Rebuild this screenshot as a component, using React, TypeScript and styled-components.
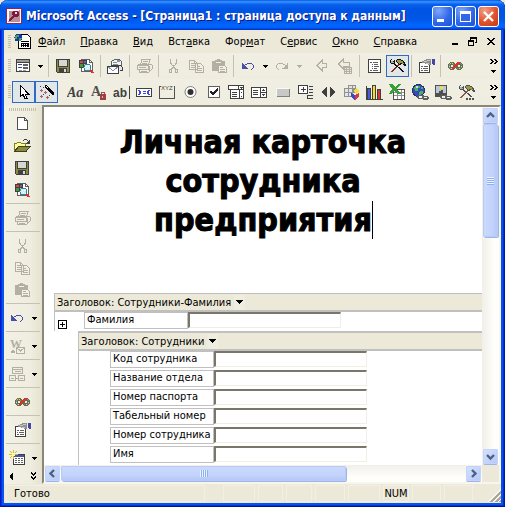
import React from "react";
import styled, { createGlobalStyle, css } from "styled-components";

const face = "#ece9d8";
const bar = "#efeddf";
const line = "#c0c0c0";
const ui = `"DejaVu Sans Condensed", "DejaVu Sans", "Noto Sans", sans-serif`;

const GlobalStyle = createGlobalStyle`
  * { box-sizing: border-box; }
  body { margin: 0; background: #ebe8d9; font-family: ${ui}; font-size: 11px; color: #000; }
  button { font: inherit; color: inherit; margin: 0; padding: 0; border: 0; background: none; }
  svg { flex: none; }
`;

/* ---------- window frame ---------- */

const Window = styled.div`
  min-height: 100vh;
  display: flex;
  flex-direction: column;
  padding: 0 4px 4px;
  border-radius: 8px 8px 0 0;
  overflow: hidden;
  background: ${face};
  box-shadow: inset 1px 0 #0019cf, inset -1px 0 #001aa0, inset 0 -1px #001590, inset 2px -2px #0831d9,
    inset -2px 0 #0030d0, inset 4px -4px #0855ee, inset -4px 0 #0850ee;
`;

const TitleBar = styled.header`
  display: flex;
  align-items: center;
  height: 30px;
  margin: 0 -4px;
  padding: 2px 6px 0;
  gap: 4px;
  background: linear-gradient(#0058e6 0, #3a93ff 6%, #0a62ee 14%, #0054e3 30%, #0055e5 60%, #0066ff 86%, #0060f8 92%, #003dd7 97%, #0033c0 100%);
`;

const Title = styled.h1`
  flex: 1;
  margin: 0;
  color: #fff;
  font-size: 12px;
  line-height: 18px;
  font-weight: bold;
  white-space: nowrap;
  text-shadow: 1px 1px #0a1883;
`;

const Captions = styled.div`
  display: flex;
  gap: 2px;
`;

const Caption = styled.button<{ $close?: boolean }>`
  width: 21px;
  height: 21px;
  border: 1px solid #fff;
  border-radius: 3px;
  background: ${(p) =>
    p.$close
      ? "radial-gradient(circle at 30% 20%, #f0a088, #e2512b 55%, #c43a12)"
      : "radial-gradient(circle at 30% 20%, #7ea6fa, #3168ea 55%, #1f50d8)"};
  svg { display: block; }
`;

/* ---------- menu and toolbars ---------- */

const MenuBar = styled.nav`
  display: flex;
  align-items: center;
  height: 23px;
  padding: 0 5px 0 4px;
`;

const Grip = styled.span<{ $wide?: boolean }>`
  ${(p) =>
    p.$wide
      ? css`
          width: 28px;
          height: 3px;
          margin: 3px auto 2px;
          background: repeating-linear-gradient(90deg, #c3bfab 0 1px, transparent 1px 2px);
        `
      : css`
          width: 3px;
          height: 14px;
          flex: none;
          background: repeating-linear-gradient(#c3bfab 0 1px, transparent 1px 2px);
        `}
`;

const MenuList = styled.div`
  display: flex;
  flex: 1;
  gap: 15px;
  margin-left: 7px;
`;

const MenuItem = styled.button`
  line-height: 16px;
  white-space: nowrap;
`;

const ChildButtons = styled.div`
  display: flex;
  gap: 8px;
`;

const ChildButton = styled.button`
  width: 11px;
  height: 11px;
  svg { display: block; }
`;

const DocIcon = styled.span`
  margin-left: 3px;
  height: 17px;
`;

const Toolbar = styled.div`
  display: flex;
  align-items: center;
  height: 26px;
  padding: 0 3px 0 4px;
  background: linear-gradient(#f1efe3, ${bar});
`;

const Tools = styled.div`
  display: flex;
  flex: 1;
  align-items: center;
  margin-left: 1px;
`;

const ToolButton = styled.button<{ $on?: boolean }>`
  display: flex;
  align-items: center;
  justify-content: center;
  flex: none;
  width: 23px;
  height: 22px;
  border: 1px solid ${(p) => (p.$on ? "#316ac5" : "transparent")};
  background: ${(p) => (p.$on ? "#e1e6e8" : "transparent")};
`;

const DropButton = styled.button`
  display: flex;
  align-items: center;
  justify-content: center;
  flex: none;
  width: 11px;
  height: 22px;
`;

const Divider = styled.span<{ $blank?: boolean }>`
  flex: none;
  width: 1px;
  height: 22px;
  margin: 0 3px 0 2px;
  background: ${(p) => (p.$blank ? "transparent" : "#c5c2b0")};
`;

const More = styled.button`
  display: flex;
  width: 9px;
  height: 20px;
`;

/* ---------- work area ---------- */

const Work = styled.div`
  display: flex;
  flex: 1;
`;

const SideBar = styled.aside`
  display: flex;
  flex-direction: column;
  width: 38px;
  flex: none;
  padding: 0 2px;
  background: linear-gradient(90deg, #f3f1e6, ${bar} 70%, #e6e2d0);
`;

const SideRow = styled.div<{ $drop?: boolean }>`
  display: flex;
  justify-content: ${(p) => (p.$drop ? "flex-start" : "center")};
  gap: 0;
  height: 22px;
  padding-right: ${(p) => (p.$drop ? "0" : "1px")};
`;

const SideDivider = styled.span`
  height: 1px;
  margin: 2px 0 3px;
  background: #c5c2b0;
`;

const SideEnd = styled.div`
  display: flex;
  justify-content: space-between;
  padding: 3px 3px 0;
  height: 14px;
`;

const View = styled.main`
  display: grid;
  flex: 1;
  min-width: 0;
  grid-template: 1fr 17px / 1fr 17px;
  border-style: solid;
  border-width: 2px;
  border-color: #8a8778 #f8f6ec #f8f6ec #8a8778;
  background: ${face};
`;

const Page = styled.div`
  display: flex;
  flex-direction: column;
  min-width: 0;
  background: #fff;
`;

const Heading = styled.h2`
  margin: 0;
  padding: 16px 0 53px;
  font-size: 32px;
  line-height: 39px;
  font-weight: bold;
  text-align: center;
  -webkit-text-stroke: 1px #000;
`;

const Caret = styled.span`
  box-shadow: 1px 0 #000;
`;

const Group = styled.section`
  margin-left: 10px;
`;

const SubGroup = styled.section`
  flex: 1;
  margin-left: 34px;
  padding-bottom: 1px;
  border-left: 1px solid ${line};
`;

const Band = styled.div<{ $thick?: boolean }>`
  display: flex;
  align-items: center;
  gap: 3px;
  height: ${(p) => (p.$thick ? "20px" : "19px")};
  padding-left: 2px;
  border-top: ${(p) => (p.$thick ? "2px" : "1px")} solid ${line};
  border-bottom: 2px solid ${line};
  background: ${face};
  white-space: nowrap;
`;

const BandDrop = styled.button`
  display: flex;
  align-items: center;
  justify-content: center;
  width: 11px;
  height: 15px;
  background: #efeddf;
`;

const GroupBody = styled.div`
  border-left: 1px solid ${line};
`;

const GroupRow = styled.div`
  display: flex;
  align-items: flex-start;
  height: 19px;
`;

const Expander = styled.button`
  width: 9px;
  height: 9px;
  margin: 8px 17px 0 3px;
  svg { display: block; }
`;

const Fields = styled.div`
  display: flex;
  flex-direction: column;
  gap: 2px;
  padding-left: 31px;
`;

const Field = styled.div`
  display: flex;
  height: 17px;
`;

const FieldLabel = styled.label`
  width: 104px;
  height: 17px;
  padding-left: 2px;
  border: 1px solid ${line};
  line-height: 14px;
  white-space: nowrap;
`;

const FieldInput = styled.input`
  width: 153px;
  height: 16px;
  padding: 0 2px;
  border-style: solid;
  border-width: 2px 1px 1px 2px;
  border-color: #79766a #f1efe2 #f1efe2 #79766a;
  background: #fff;
  font: inherit;
  outline: 0;
`;

/* ---------- scroll bars ---------- */

const Scroll = styled.div<{ $horizontal?: boolean }>`
  display: flex;
  flex-direction: ${(p) => (p.$horizontal ? "row" : "column")};
  gap: 1px;
  padding: 1px;
  background: linear-gradient(${(p) => (p.$horizontal ? "180deg" : "90deg")}, #f0efe8, #fefefb 70%);
`;

const ScrollButton = styled.button`
  flex: none;
  width: 15px;
  height: 15px;
  border-radius: 2px;
  background: linear-gradient(135deg, #d6e2fe, #b4c8f6);
  box-shadow: inset 0 0 0 1px #c3d3fd, 0 1px #9db5ea;
  svg { display: block; }
`;

const Thumb = styled.div<{ $horizontal?: boolean }>`
  display: flex;
  align-items: center;
  justify-content: center;
  flex: ${(p) => (p.$horizontal ? "285 0 0" : "113 0 0")};
  border-radius: 2px;
  background: linear-gradient(${(p) => (p.$horizontal ? "180deg" : "90deg")}, #cbdafe, #c2d3fc 60%, #b3c6f4);
  box-shadow: inset 0 0 0 1px #b9cbf5, 1px 1px #9db5ea;
`;

const Ridges = styled.span<{ $horizontal?: boolean }>`
  width: ${(p) => (p.$horizontal ? "8px" : "7px")};
  height: ${(p) => (p.$horizontal ? "7px" : "8px")};
  background: repeating-linear-gradient(${(p) => (p.$horizontal ? "90deg" : "180deg")}, #eef4fe 0 1px, #8cb0f8 1px 2px);
`;

const Track = styled.div<{ $grow: number }>`
  flex: ${(p) => p.$grow} 0 0;
`;

/* ---------- status bar ---------- */

const StatusBar = styled.footer`
  display: flex;
  align-items: stretch;
  gap: 3px;
  height: 19px;
  padding: 1px 0 1px 2px;
`;

const Panel = styled.div<{ $w?: number; $gap?: boolean }>`
  width: ${(p) => (p.$w ? p.$w + "px" : "auto")};
  flex: ${(p) => (p.$w ? "none" : "1")};
  margin-right: ${(p) => (p.$gap ? "15px" : "0")};
  padding-left: ${(p) => (p.$w ? "0" : "7px")};
  border: 1px solid #f2f0e4;
  line-height: 16px;
  text-align: ${(p) => (p.$w ? "center" : "left")};
`;

const Corner = styled.span`
  width: 25px;
  display: flex;
  justify-content: flex-end;
  align-items: flex-end;
`;

/* ---------- icons ---------- */

const Ico = ({ children, w = 17, h = 16 }: { children: React.ReactNode; w?: number; h?: number }) => (
  <svg width={w} height={h} viewBox={`0 0 ${w} ${h}`} shapeRendering="crispEdges" fill="none" aria-hidden="true">
    {children}
  </svg>
);
const F = ({ d, c = "#404040" }: { d: string; c?: string }) => <path d={d} fill={c} />;
const S = ({ d, c = "#404040", f = "none", w = 1 }: { d: string; c?: string; f?: string; w?: number }) => (
  <path d={d} stroke={c} fill={f} strokeWidth={w} />
);
const G = "#b3b0a2";

const Down = ({ c = "#000" }: { c?: string }) => (
  <Ico w={5} h={3}><F c={c} d="M0 0h5v1H0zM1 1h3v1H1zM2 2h1v1H2z" /></Ico>
);
const BigDown = () => (
  <Ico w={7} h={4}><F c="#000" d="M0 0h7v1H0zM1 1h5v1H1zM2 2h3v1H2zM3 3h1v1H3z" /></Ico>
);
const MoreIcon = () => (
  <Ico w={9} h={20}>
    <F c="#000" d="M1 3h2v1H1zM2 4h2v1H2zM3 5h2v1H3zM2 6h2v1H2zM1 7h2v1H1zM5 3h2v1H5zM6 4h2v1H6zM7 5h2v1H7zM6 6h2v1H6zM5 7h2v1H5zM2 14h5v1H2zM3 15h3v1H3zM4 16h1v1H4z" />
  </Ico>
);

const FormIcon = () => (
  <Ico>
    <S d="M1.5 1.5h13v12h-13z" f="#fff" />
    <F c="#9a9a9a" d="M2 2h12v2H2z" /><F c="#404040" d="M1 4h14v1H1z" />
    <F c="#33449c" d="M3 6h4v1H3zM3 9h4v1H3z" />
    <S c="#606060" d="M8.5 6.5h4v1h-4zM8.5 9.5h4v1h-4z" />
    <F c="#9a9a9a" d="M4 12h3v1H4zM8 12h3v1H8z" />
  </Ico>
);
const Save = () => (
  <Ico>
    <S d="M1.5 1.5h13v13h-12l-1-1z" f="#8a8a3c" />
    <F c="#d6d6d6" d="M4 2h8v6H4z" /><S d="M3.5 2v6.5h9V2" />
    <F c="#404040" d="M4 10h8v5H4z" /><F c="#d6d6d6" d="M9 11h2v3H9z" />
  </Ico>
);
const Preview = () => (
  <Ico>
    <S d="M3.5 1.5h8l3 3v9h-11z" f="#fff" c="#606060" /><S d="M11.5 1.5v3h3" c="#606060" />
    <F c="#404040" d="M1 2h8v8H1z" />
    <F c="#e04040" d="M2 3h3v2H2z" /><F c="#4a68d8" d="M6 3h2v2H6z" /><F c="#3c9c3c" d="M2 6h3v3H2z" /><F c="#e8d040" d="M6 6h2v3H6z" />
    <circle cx="9.5" cy="9.5" r="3.5" fill="#c8f4f8" stroke="#4a7c90" />
    <F c="#fff" d="M8 8h1v1H8zM10 8h1v1h-1zM9 10h1v1H9z" />
    <S c="#e03030" w={2} d="M12.5 12.5l3 2.5" />
  </Ico>
);
const MailPrint = () => (
  <Ico>
    <S d="M4.5 7V3.5l3-2h5l2 2V9" f="#f4f4f4" c="#606060" />
    <F c="#8090b0" d="M10 2h3v2h-3z" /><F c="#909090" d="M6 4h4v1H6zM6 6h5v1H6z" />
    <S d="M3.5 7.5h10l2 2v3h-3" f="#e4e4e4" />
    <S d="M.5 8.5h11v7H.5z" f="#fff" /><S c="#8090b0" d="M1 9l5 3.5L11 9" />
  </Ico>
);
const Printer = () => (
  <Ico>
    <S c={G} d="M4.5 6.5l1.5-5h8l-1.5 5" /><F c={G} d="M7 3h5v1H7zM6 5h5v1H6z" />
    <S c={G} d="M1.5 7.5l2-1.5h11l1.5 1v4l-2 2M1.5 7.5h11l2.5-1.5M1.5 7.5v4h11v-4M3.5 11.5v3h9l1.5-2" />
    <F c={G} d="M3 9h7v1H3zM5 13h6v1H5zM13 8h1v4h-1z" />
  </Ico>
);
const Scissors = () => (
  <Ico>
    <S c={G} d="M5.5 1v4l5 6M11.5 1v4l-5 6" /><F c={G} d="M8 7h1v3H8z" />
    <S c={G} d="M4.5 11.5h2v3h-2zM10.5 11.5h2v3h-2z" />
  </Ico>
);
const Copy = () => (
  <Ico>
    <S c={G} d="M1.5 2.5h5l3 3v6h-8zM6.5 2.5v3h3M7.5 5.5h5l3 3v6h-8z" f="#f3f1e6" />
    <F c={G} d="M3 5h3v1H3zM3 7h4v1H3zM3 9h4v1H3zM9 8h3v1H9zM9 10h5v1H9zM9 12h5v1H9z" />
  </Ico>
);
const Paste = () => (
  <Ico>
    <F c={G} d="M1 3h3V2h2V1h3v1h2v1h3v10H1z" /><F c="#efeddf" d="M5 4h5v1H5z" />
    <S c={G} d="M7.5 7.5h6l2 2v5h-8z" f="#f3f1e6" /><F c={G} d="M9 9h3v1H9zM9 11h5v1H9zM9 13h5v1H9z" />
  </Ico>
);
const Undo = () => (
  <Ico>
    <F c="#4650a8" d="M2 5h1v5h5v1H2zM4 7h1v1H4zM5 8h1v1H5zM6 9h1v1H6zM4 8h1v2H4zM5 6h2v1H5zM7 5h5v1H7zM12 6h1v1h-1zM13 7h1v3h-1zM12 10h1v1h-1zM11 11h1v1h-1z" />
    <F c="#4650a8" d="M3 6h1v4H3zM5 9h1v1H5z" />
  </Ico>
);
const Redo = () => (
  <Ico>
    <F c={G} d="M14 5h-1v5H8v1h6zM12 7h1v3h-1zM11 8h1v2h-1zM10 9h1v1h-1zM9 6h2v1H9zM4 5h5v1H4zM3 6h1v1H3zM2 7h1v3H2zM3 10h1v1H3zM4 11h1v1H4zM11 7h1v1h-1z" />
  </Ico>
);
const Back = ({ grid }: { grid?: boolean }) => (
  <Ico>
    <S c={G} d={grid ? "M1.5 6L6 1.5V4h6.500v4H6v2.500z" : "M3 7.5L8 2.5V5.5h4.500v4H8v3z"} />
    {grid && <><F c={G} d="M7 9h8v7H7z" /><F c="#efeddf" d="M8 10h1v1H8zM10 10h2v1h-2zM13 10h1v1h-1zM8 12h1v1H8zM10 12h2v1h-2zM13 12h1v1h-1zM8 14h1v1H8zM10 14h2v1h-2zM13 14h1v1h-1z" /></>}
  </Ico>
);
const ListIcon = () => (
  <Ico>
    <S d="M2.5 1.5h12v13h-12z" f="#fff" />
    <F c="#606060" d="M4 4h2v1H4zM7 4h5v1H7zM6 6h1v1H6zM8 6h4v1H8zM6 8h1v1H6zM8 8h5v1H8zM6 10h1v1H6zM8 10h3v1H8zM4 12h2v1H4zM7 12h5v1H7z" />
  </Ico>
);
const ToolsIcon = ({ dots }: { dots?: boolean }) => {
  const ink = dots ? "#505050" : "#101010";
  return (
    <Ico>
      <F c={ink} d="M1 2h1v3H1zM2 1h1v1H2zM5 2h1v1H5zM4 3h2v2H4zM2 5h4v1H2zM5 6h2v1H5zM6 7h2v1H6zM7 8h2v1H7zM9 9h2v1H9zM10 10h2v1h-2zM11 11h2v1h-2zM12 12h2v1h-2zM13 13h2v1h-2z" />
      <F c="#a8acb0" d="M2 3h2v2H2zM4 4h1v1H4z" />
      <F c={dots ? "#8c5a48" : "#8c2c18"} d="M9 6h2v1H9zM8 7h2v1H8zM6 9h2v1H6zM5 10h2v1H5zM4 11h2v1H4zM3 12h2v1H3zM2 13h2v1H2z" />
      <F c={ink} d="M8 1h4v1h2v1h1v1h1v2h1v2h-2V7h-1V6h-2v1h-2V6H9V5H8V4H7V2h1z" />
      <F c="#9a9a48" d="M8 2h4v1h2v2h1v1h-2V5h-2v1h-1V5H9V4H8z" />
      {dots && <><F c={bar} d="M8 13h9v3H8z" /><F c="#505050" d="M8 14h2v2H8zM11 14h2v2h-2zM14 14h2v2h-2z" /></>}
    </Ico>
  );
};
const Props = () => (
  <Ico>
    <S d="M1.5 4.5h10v10h-10z" f="#fff" /><F c="#606060" d="M3 8h2v1H3zM6 8h4v1H6zM3 10h1v1H3zM5 10h5v1H5zM3 12h2v1H3zM6 12h4v1H6z" />
    <F c="#909090" d="M4 3h2V2h2V1h5v6h-3V6H7V5H4z" /><F c="#c8c8c8" d="M6 3h3v1H6zM9 2h3v1H9zM8 5h3v1H8z" /><F c="#4648a0" d="M14 1h3v6h-2V6h-1z" />
  </Ico>
);
const Infinity = () => (
  <Ico>
    <F c="#6a6a50" d="M3 4h4v1h1v1h1V5h1V4h4v1h1v1h1v4h-1v1h-1v1h-4v-1H9v-1H8v1H7v1H3v-1H2v-1H1V6h1V5h1z" />
    <F c={bar} d="M4 7h2v2H4zM11 7h2v2h-2z" />
    <F c="#f0d840" d="M3 5h1v1H3zM5 5h1v1H5zM2 8h1v1H2zM4 10h1v1H4zM14 8h1v1h-1zM12 10h1v1h-1z" />
    <F c="#48b058" d="M4 4h1v1H4zM6 6h1v1H6zM2 9h1v1H2zM14 6h1v1h-1zM13 10h1v1h-1z" />
    <F c="#6888e8" d="M2 6h1v2H2zM3 10h1v1H3zM14 9h1v1h-1zM10 10h1v1h-1zM13 5h1v1h-1z" />
    <F c="#e03028" d="M10 4h3v2h-2v1h-1v1H9v1H8v1H7v1H5v-2h1V8h1V7h1V6h1V5h1z" />
  </Ico>
);

const Pointer = () => (
  <Ico><S c="#000" f="#fff" d="M5.5 1.5v11l2.5-2 2 4h2l-2-4.500h3.500z" /></Ico>
);
const Wand = () => (
  <Ico>
    <F c="#000" d="M7 1h2v1h1v1h1v1h1v1h1v1h1v1h1v1h1v3h-2v-1h-1V9h-1V8h-1V7h-1V6H9V5H8V4H7z" /><F c="#fff" d="M8 2h1v1H8zM9 3h1v1H9z" />
    <F c="#b06060" d="M2 6h3v1H2zM3 5h1v3H3zM6 8h3v1H6zM7 7h1v3H7zM2 12h3v1H2zM3 11h1v3H3zM8 13h3v1H8zM9 12h1v3H9z" />
    <F c="#404040" d="M2 2h1v1H2zM5 3h1v1H5zM11 11h1v1h-1zM5 10h1v1H5z" />
  </Ico>
);
const LabelIcon = () => (
  <Ico><text x="0" y="13" fill="#404040" fontFamily="Liberation Serif, serif" fontStyle="italic" fontWeight="bold" fontSize="14">Aa</text></Ico>
);
const LockedText = () => (
  <Ico>
    <text x="1" y="12" fill="#505050" fontFamily="Liberation Serif, serif" fontWeight="bold" fontSize="14">A</text>
    <S c="#a04848" d="M11.5 10V8.500h3V10" /><F c="#a04040" d="M10 10h6v6h-6z" /><F c="#e8b0b0" d="M12 12h1v2h-1z" />
  </Ico>
);
const TextBoxIcon = () => (
  <Ico><text x="0" y="13" fill="#404040" fontFamily="Liberation Sans, sans-serif" fontWeight="bold" fontSize="12">ab</text><F d="M16 2h1v13h-1z" /></Ico>
);
const ScrollingText = () => (
  <Ico><S d="M.5 4.5h15v8H.5z" f="#fff" /><F c="#3c48e0" d="M2 6h2v1H2zM3 7h2v3H3zM2 10h2v1H2zM12 6h2v1h-2zM11 7h2v3h-2zM12 10h2v1h-2zM7 7h3v1H7zM7 9h3v1H7z" /></Ico>
);
const FrameIcon = () => (
  <Ico><S c="#505050" d="M2 2.5H.5v12h15v-12H15" /><text x="2" y="6" fill="#404040" fontFamily="Liberation Sans, sans-serif" fontSize="6">XYZ</text></Ico>
);
const RadioIcon = () => (
  <Ico><g shapeRendering="auto"><circle cx="8.5" cy="8" r="5.5" stroke="#808080" fill="#fff" /><circle cx="8.5" cy="8" r="3" fill="#303030" /></g></Ico>
);
const CheckIcon = () => (
  <Ico><S c="#606060" f="#fff" d="M3.5 2.5h11v11h-11z" /><S c="#202020" w={2} d="M5.5 7.5L8 10.5 13 4.5" /></Ico>
);
const ComboIcon = () => (
  <Ico><S f="#fff" d="M.5 1.5h15v4H.5zM2.5 5.5h9v9h-9zM11.5 5.5h4v9h-4zM10.5 1.5v4" /><F d="M4 8h5v1H4zM4 10h5v1H4zM4 12h5v1H4zM12 3h3v1h-3zM13 4h1v1h-1zM13 8h1v1h-1zM13 12h1v1h-1z" /></Ico>
);
const ListBoxIcon = () => (
  <Ico><S f="#fff" d="M.5 3.5h15v10H.5zM9.5 3.5v10M9.5 8.5h6" /><F d="M2 6h5v1H2zM2 8h5v1H2zM2 10h5v1H2zM12 5h1v1h-1zM11 6h3v1h-3zM11 10h3v1h-3zM12 11h1v1h-1z" /></Ico>
);
const PushIcon = () => (
  <Ico><F c="#808080" d="M3 5h13v8H3z" /><F c="#f8f8f8" d="M2 4h13v8H2z" /><F c="#c8c8c4" d="M3 5h12v7H3z" /></Ico>
);
const ExpandIcon = () => (
  <Ico><S f="#fff" d="M1.5 1.5h9v8h-9z" /><F d="M4 5h5v1H4zM6 3h1v5H6zM12 2h4v1h-4zM12 5h4v1h-4zM12 8h4v1h-4zM10 11h6v1h-6zM10 14h6v1h-6zM10 11h1v4h-1z" /></Ico>
);
const NavIcon = () => (
  <Ico><F d="M7 3v10H6L2 8l4-5zM10 3h1l4 5-4 5h-1z" c="#404040" /></Ico>
);
const PivotIcon = () => (
  <Ico>
    <F c="#909090" d="M1 4h4V1h8v8h-3v4H1z" /><F c="#e4e4e4" d="M2 5h3v3H2zM6 5h3v3H6zM2 9h3v3H2zM6 9h3v3H6zM6 2h3v2H6zM10 2h2v2h-2z" />
    <F c="#f0e040" d="M10 7l3-3 3 3-3 3z" /><F c="#3848d0" d="M8 9l4 2v5l-4-3z" /><F c="#e03838" d="M12 11l4-2v4l-4 3z" />
  </Ico>
);
const ChartIcon = () => (
  <Ico>
    <F d="M0 2h1v13h16v1H0z" /><F d="M1 4h4v11H1zM6 1h4v14H6zM11 5h4v10h-4z" />
    <F c="#4858e0" d="M2 5h2v10H2z" /><F c="#f0e020" d="M7 2h2v13H7z" /><F c="#e03030" d="M12 6h2v9h-2z" />
  </Ico>
);
const SheetIcon = () => (
  <Ico>
    <S f="#fff" d="M4.5 5.5h11v10h-11z" c="#505050" /><S c="#909090" d="M5 8.5h10M5 11.5h10M8.5 6v9M12.5 6v9" />
    <F c="#38a038" d="M0 0h4l2 3 3-3h3L8 5l4 5H8L5 7l-3 3H0l3-5z" />
  </Ico>
);
const Chain = () => (
  <><F c="#606060" d="M6 11h6v1h4v1h1v2h-1v1h-5v-1H6v-1H5v-2h1z" /><F c="#f0f0f0" d="M7 12h3v2H7zM12 13h3v1h-3z" /></>
);
const Globe = () => (
  <>
    <circle cx="6.5" cy="6.5" r="6" fill="#3848c0" stroke="#303060" />
    <F c="#40b858" d="M3 2h5v2H6v3H3V5H2zM8 7h3v3H9v1H7V8zM9 3h2v2H9z" /><F c="#b8e0f8" d="M4 2h2v2H4z" />
  </>
);
const WebIcon = () => <Ico><Globe /><Chain /></Ico>;
const PictureIcon = () => (
  <Ico>
    <S c="#505050" f="#b8c8d8" d="M.5 1.5h11v11h-11z" /><F c="#505050" d="M1 9h3V7h2V6h2v3h3v3H1z" /><F c="#f0e030" d="M5 2h3v3H5z" /><Chain />
  </Ico>
);

const NewIcon = () => (
  <Ico><S f="#fff" d="M3.5 1.5h7l3 3v9h-10z" c="#505050" /><S d="M10.5 1.5v3h3" c="#505050" /></Ico>
);
const OpenIcon = () => (
  <Ico>
    <S c="#808020" f="#fffca0" d="M.5 13.5v-8h2l1-1h3l1 1h4v3" /><S c="#404018" f="#8a8a3c" d="M.5 13.5l4-5h11.500l-4 5z" />
    <F c="#404040" d="M9 2h1v1H9zM10 1h3v1h-3zM13 2h1v1h-1zM15 2h1v4h-4V5h1V4h1V3h1z" />
  </Ico>
);
const WordIcon = () => (
  <Ico>
    <text x="1" y="10" fill={G} fontFamily="Liberation Serif, serif" fontWeight="bold" fontSize="12">W</text>
    <F c={G} d="M2 15v-2h1v-1h2v1h1v2z" /><S c={G} f="#f3f1e6" d="M7.5 9.5h8v6h-8z" /><S c={G} d="M8 10l3.5 3 3.5-3" />
  </Ico>
);
const RelateIcon = () => (
  <Ico>
    <S c={G} d="M3.5 1.5h10v6h-10zM3 3.5h11M6 5.5h6M.5 9.5h6v5h-6zM9.5 9.5h6v5h-6zM2 12.5h3M11 12.5h3M6.5 12.5h3" />
  </Ico>
);
const NewTable = () => (
  <Ico>
    <S d="M4.5 4.5h11v10h-11z" f="#fff" /><F c="#4650b0" d="M5 5h10v2H5z" /><F c="#606060" d="M6 8h2v1H6zM9 8h2v1H9zM12 8h2v1h-2zM6 10h2v1H6zM9 10h2v1H9zM12 10h2v1h-2zM6 12h2v1H6zM9 12h2v1H9zM12 12h2v1h-2z" />
    <F c="#d8b828" d="M4 0h1v3H4zM4 6h1v3H4zM0 4h3v1H0zM6 4h3v1H6zM1 1h1v1H1zM2 2h1v1H2zM7 1h1v1H7zM6 2h1v1H6zM1 7h1v1H1zM2 6h1v1H2z" /><F c="#fff890" d="M3 3h3v3H3z" />
  </Ico>
);
const AccessIcon = () => (
  <Ico w={16} h={16}>
    <F c="#982050" d="M0 0h16v16H0z" /><F c="#fff" d="M1 1h14v14H1z" /><F c="#b89098" d="M2 2h12v12H2z" /><F c="#fff" d="M2 2h11v1H3v10H2z" />
    <F c="#801840" d="M7 3h5v1h1v4h-1v1H8v1H7v1H6v1H5v1H3v-2h1v-1h1V9h1V8h1V7H6V4h1z" /><F c="#f4d8e0" d="M9 4h2v2H9z" />
  </Ico>
);
const PageIcon = () => (
  <Ico w={17} h={17}>
    <S c="#000" f="#fff" d="M4.5 1.5h9l3 3v11h-12z" /><F c="#000" d="M7 8h8v1H7zM7 10h8v4H7z" /><F c="#fff" d="M8 11h1v1H8zM10 11h1v1h-1zM12 11h1v1h-1zM8 13h1v1H8zM10 13h1v1h-1zM12 13h1v1h-1z" />
    <circle cx="4.5" cy="4.5" r="4" fill="#2030b0" /><F c="#38b048" d="M2 2h3v2H3v2H1V4zM5 5h3v1H7v2H5z" />
  </Ico>
);

/* ---------- data ---------- */

type Tool = { name: string; icon?: React.ReactNode; on?: boolean };
type Item = Tool | "|" | " " | "v" | "x";

const mainTools: Item[] = [
  { name: "Вид", icon: <FormIcon /> }, "v", "|",
  { name: "Сохранить", icon: <Save /> }, { name: "Предварительный просмотр", icon: <Preview /> }, "|",
  { name: "Сообщение", icon: <MailPrint /> }, "|",
  { name: "Печать", icon: <Printer /> }, "|",
  { name: "Вырезать", icon: <Scissors /> }, { name: "Копировать", icon: <Copy /> }, { name: "Вставить", icon: <Paste /> }, "|",
  { name: "Отменить", icon: <Undo /> }, "v", { name: "Вернуть", icon: <Redo /> }, "x", " ",
  { name: "Повысить уровень", icon: <Back /> }, { name: "Группировать по таблице", icon: <Back grid /> }, "|",
  { name: "Список полей", icon: <ListIcon /> }, { name: "Панель элементов", icon: <ToolsIcon />, on: true }, "|",
  { name: "Свойства", icon: <Props /> }, "|",
  { name: "Редактор сценариев", icon: <Infinity /> },
];

const controlTools: Item[] = [
  { name: "Выбор объектов", icon: <Pointer />, on: true }, { name: "Мастера", icon: <Wand />, on: true }, " ",
  { name: "Надпись", icon: <LabelIcon /> }, { name: "Присоединенный текст", icon: <LockedText /> },
  { name: "Поле", icon: <TextBoxIcon /> }, { name: "Бегущая строка", icon: <ScrollingText /> },
  { name: "Группа", icon: <FrameIcon /> }, { name: "Переключатель", icon: <RadioIcon /> },
  { name: "Флажок", icon: <CheckIcon /> }, { name: "Раскрывающийся список", icon: <ComboIcon /> },
  { name: "Список", icon: <ListBoxIcon /> }, { name: "Кнопка", icon: <PushIcon /> },
  { name: "Развернуть", icon: <ExpandIcon /> }, { name: "Переходы по записям", icon: <NavIcon /> },
  { name: "Сводная таблица", icon: <PivotIcon /> }, { name: "Диаграмма", icon: <ChartIcon /> },
  { name: "Электронная таблица", icon: <SheetIcon /> }, { name: "Гиперссылка", icon: <WebIcon /> },
  { name: "Графическая гиперссылка", icon: <PictureIcon /> }, { name: "Другие элементы", icon: <ToolsIcon dots /> },
];

const sideTools: { name: string; icon?: React.ReactNode; drop?: boolean }[] = [
  { name: "Создать", icon: <NewIcon /> }, { name: "Открыть", icon: <OpenIcon /> }, { name: "Сохранить", icon: <Save /> },
  { name: "Просмотр", icon: <Preview /> }, { name: "|" }, { name: "Печать", icon: <Printer /> }, { name: "|" },
  { name: "Вырезать", icon: <Scissors /> }, { name: "Копировать", icon: <Copy /> }, { name: "Вставить", icon: <Paste /> }, { name: "|" },
  { name: "Отменить", icon: <Undo />, drop: true }, { name: "|" },
  { name: "Связи с Office", icon: <WordIcon />, drop: true }, { name: "|" },
  { name: "Анализ", icon: <RelateIcon />, drop: true }, { name: "|" },
  { name: "Редактор сценариев", icon: <Infinity /> }, { name: "|" },
  { name: "Свойства", icon: <Props /> }, { name: "|" },
  { name: "Новый объект", icon: <NewTable />, drop: true },
];

const menus = [
  ["", "Ф", "айл"], ["", "П", "равка"], ["", "В", "ид"], ["Вст", "а", "вка"],
  ["Фор", "м", "ат"], ["С", "е", "рвис"], ["", "О", "кно"], ["", "С", "правка"],
];

const fields = ["Код сотрудника", "Название отдела", "Номер паспорта", "Табельный номер", "Номер сотрудника", "Имя"];
const panels = [32, 25, 26, 30, 32, 26, 29, 29];

/* ---------- parts ---------- */

const ToolRow = ({ label, items }: { label: string; items: Item[] }) => (
  <Toolbar role="toolbar" aria-label={label}>
    <Grip />
    <Tools>
      {items.map((t, i) =>
        t === "|" || t === " " ? (
          <Divider key={i} $blank={t === " "} />
        ) : t === "v" || t === "x" ? (
          <DropButton key={i} aria-label="Показать список"><Down c={t === "x" ? G : "#000"} /></DropButton>
        ) : (
          <ToolButton key={i} $on={t.on} aria-label={t.name} aria-pressed={t.on}>{t.icon}</ToolButton>
        )
      )}
    </Tools>
    <More aria-label="Параметры панелей"><MoreIcon /></More>
  </Toolbar>
);

const DataField = ({ id, text }: { id: string; text: string }) => (
  <Field>
    <FieldLabel htmlFor={id}>{text}</FieldLabel>
    <FieldInput id={id} type="text" />
  </Field>
);

const arrows: Record<string, string> = {
  up: "M4 9l3.5-3.5L11 9", down: "M4 6l3.5 3.5L11 6", left: "M9 4L5.5 7.5 9 11", right: "M6 4l3.5 3.5L6 11",
};
const ScrollArrow = ({ dir, name }: { dir: string; name: string }) => (
  <ScrollButton aria-label={name}>
    <svg width="15" height="15" viewBox="0 0 15 15" aria-hidden="true">
      <path d={arrows[dir]} fill="none" stroke="#4d6185" strokeWidth="2.4" />
    </svg>
  </ScrollButton>
);

export default function App() {
  return (
    <>
      <GlobalStyle />
      <Window>
        <TitleBar>
          <AccessIcon />
          <Title>Microsoft Access - [Страница1 : страница доступа к данным]</Title>
          <Captions>
            <Caption aria-label="Свернуть"><Ico w={19} h={19}><F c="#fff" d="M4 12h7v3H4z" /></Ico></Caption>
            <Caption aria-label="Развернуть"><Ico w={19} h={19}><F c="#fff" d="M4 4h11v11H4z" /><F c="#3168ea" d="M5 7h9v7H5z" /></Ico></Caption>
            <Caption $close aria-label="Закрыть">
              <svg width="19" height="19" viewBox="0 0 19 19" aria-hidden="true"><path d="M5 5l9 9M14 5l-9 9" stroke="#fff" strokeWidth="2.4" /></svg>
            </Caption>
          </Captions>
        </TitleBar>

        <MenuBar aria-label="Меню">
          <Grip />
          <DocIcon><PageIcon /></DocIcon>
          <MenuList>
            {menus.map(([a, b, c]) => <MenuItem key={a + b + c}>{a}<u>{b}</u>{c}</MenuItem>)}
          </MenuList>
          <ChildButtons>
            <ChildButton aria-label="Свернуть страницу"><Ico w={11} h={11}><F c="#000" d="M5 7h6v2H5z" /></Ico></ChildButton>
            <ChildButton aria-label="Восстановить страницу">
              <Ico w={11} h={11}><F c="#000" d="M4 1h7v6H9V6h1V3H5v1H4z" /><F c="#000" d="M2 4h6v6H2z" /><F c={face} d="M3 6h4v3H3z" /></Ico>
            </ChildButton>
            <ChildButton aria-label="Закрыть страницу">
              <Ico w={11} h={11}><F c="#000" d="M2 2h2v1h1v1h2V3h1V2h2v1H9v1H8v1H7v1h1v1h1v1h1v1H8V8H7V7H5v1H4v1H2V8h1V7h1V6h1V5H4V4H3V3H2z" /></Ico>
            </ChildButton>
          </ChildButtons>
        </MenuBar>

        <ToolRow label="Конструктор страниц" items={mainTools} />
        <ToolRow label="Панель элементов" items={controlTools} />

        <Work>
          <SideBar>
            <Grip $wide />
            {sideTools.map((t, i) =>
              t.name === "|" ? (
                <SideDivider key={i} />
              ) : (
                <SideRow key={i} $drop={t.drop}>
                  <ToolButton aria-label={t.name}>{t.icon}</ToolButton>
                  {t.drop && <DropButton aria-label={t.name + ": список"}><Down /></DropButton>}
                </SideRow>
              )
            )}
            <SideEnd>
              <Ico w={4} h={8}><F c="#000" d="M3 1h1v7H3zM2 2h1v5H2zM1 3h1v3H1z" /></Ico>
              <Ico w={7} h={9}><F c="#000" d="M1 0h1v1h1v1h1V1h1V0h1v2H5v1H4v1H3V3H2V2H1zM1 4h1v1h1v1h1V5h1V4h1v2H5v1H4v1H3V7H2V6H1z" /></Ico>
            </SideEnd>
          </SideBar>

          <View>
            <Page>
              <Heading>
                Личная карточка<br />сотрудника<br /><Caret>предприятия</Caret>
              </Heading>
              <Group>
                <GroupBody>
                  <Band>Заголовок: Сотрудники-Фамилия<BandDrop aria-label="Параметры группы"><BigDown /></BandDrop></Band>
                  <GroupRow>
                    <Expander aria-label="Развернуть группу">
                      <Ico w={9} h={9}><S c="#000" d="M.5 .5h8v8h-8zM2 4.5h5M4.5 2v5" /></Ico>
                    </Expander>
                    <DataField id="group-name" text="Фамилия" />
                  </GroupRow>
                </GroupBody>
              </Group>
              <SubGroup>
                <Band $thick>Заголовок: Сотрудники<BandDrop aria-label="Параметры группы"><BigDown /></BandDrop></Band>
                <Fields>
                  {fields.map((f, i) => <DataField key={f} id={`field-${i}`} text={f} />)}
                </Fields>
              </SubGroup>
            </Page>
            <Scroll>
              <ScrollArrow dir="up" name="Вверх" />
              <Thumb><Ridges /></Thumb>
              <Track $grow={210} />
              <ScrollArrow dir="down" name="Вниз" />
            </Scroll>
            <Scroll $horizontal>
              <ScrollArrow dir="left" name="Влево" />
              <Thumb $horizontal><Ridges $horizontal /></Thumb>
              <Track $grow={118} />
              <ScrollArrow dir="right" name="Вправо" />
            </Scroll>
          </View>
        </Work>

        <StatusBar>
          <Panel $gap>Готово</Panel>
          {panels.map((w, i) => <Panel key={i} $w={w}>{i === 5 ? "NUM" : ""}</Panel>)}
          <Corner>
            <Ico w={13} h={13}>
              <S c="#fff" d="M0 13L13 0M5 13l8-8M10 13l3-3" /><S c="#aca899" w={2} d="M2 14L14 2M7 14l7-7M11 14l3-3" />
            </Ico>
          </Corner>
        </StatusBar>
      </Window>
    </>
  );
}
